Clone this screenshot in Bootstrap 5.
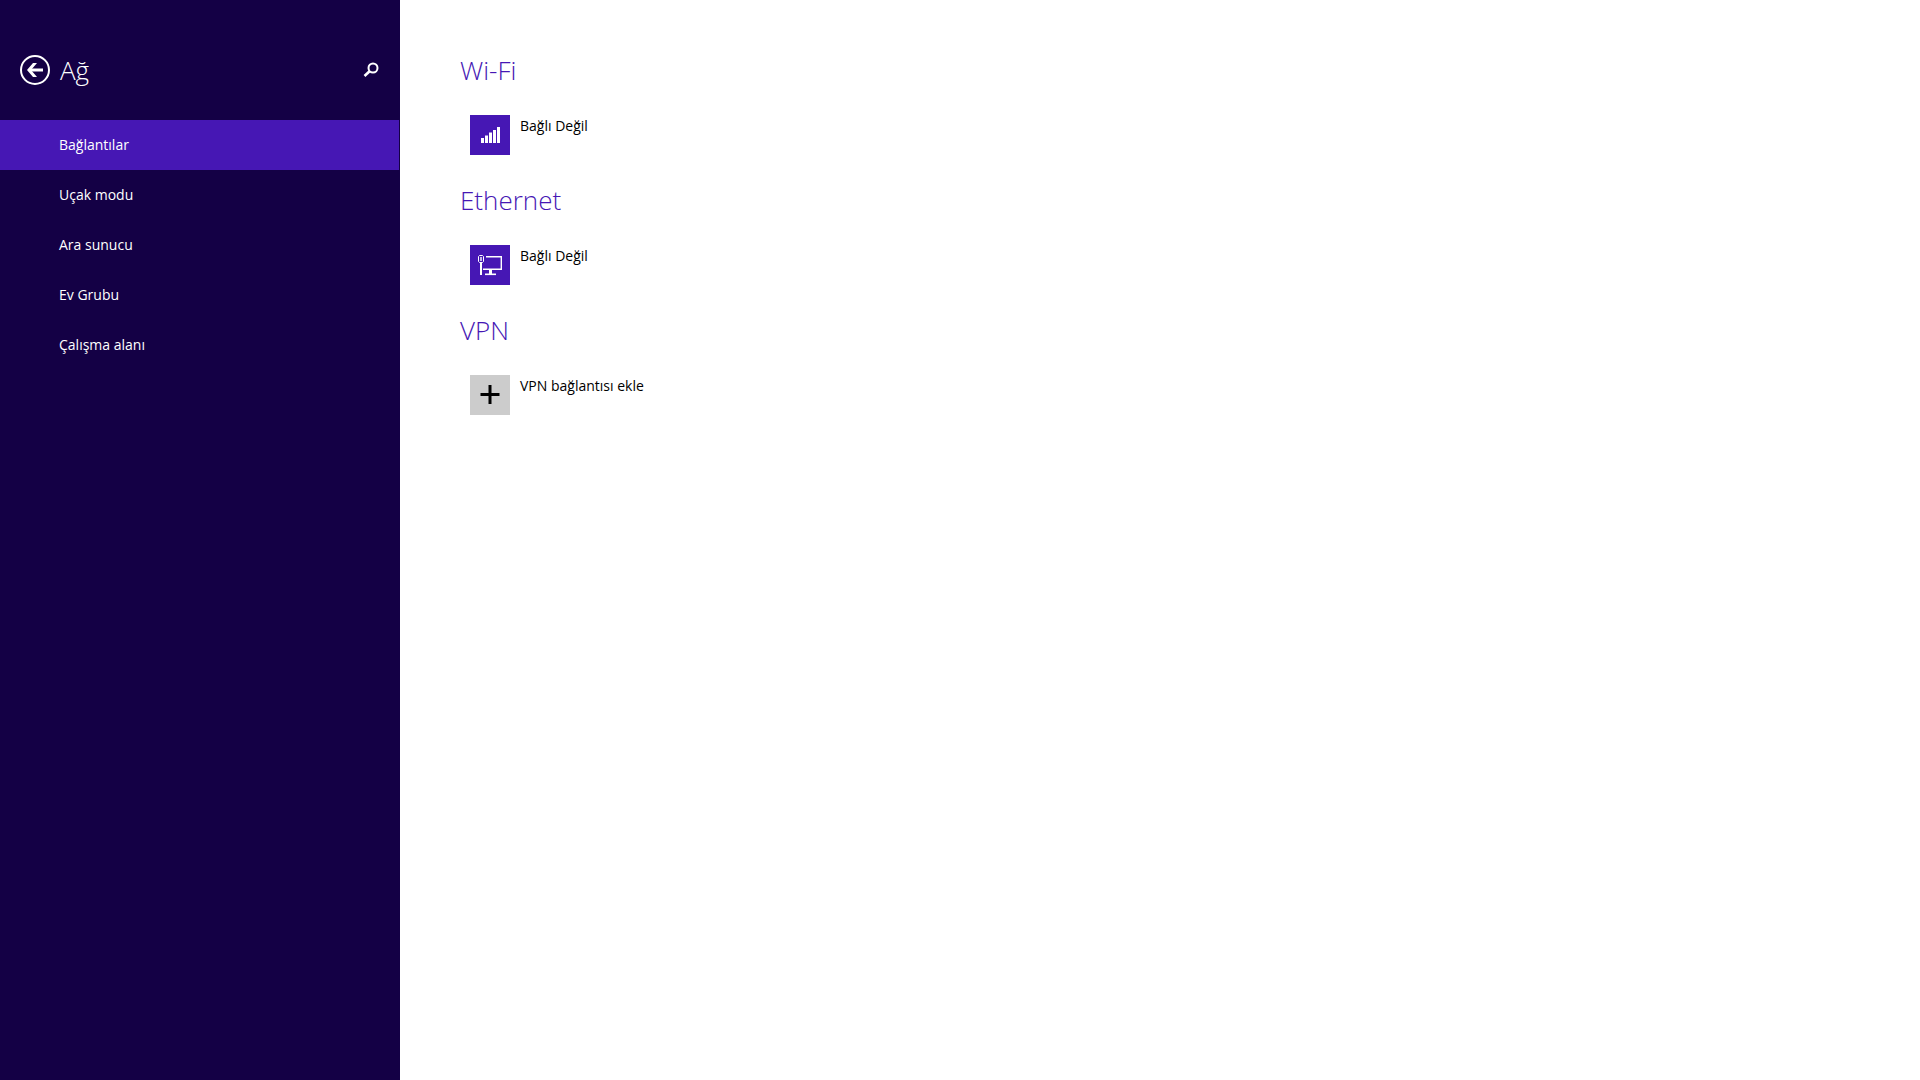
<!DOCTYPE html>
<html lang="tr">
<head>
<meta charset="utf-8">
<meta name="viewport" content="width=device-width, initial-scale=1">
<title>Ağ</title>
<link href="https://cdn.jsdelivr.net/npm/bootstrap@5.3.0/dist/css/bootstrap.min.css" rel="stylesheet">
<style>
  :root { --accent: #4617b4; --pane: #140045; }
  body { font-family: "Open Sans", "Noto Sans", sans-serif; font-size: 14px; line-height: 20px; color: #000; }
  .side-pane { width: 400px; background: var(--pane); border-right: 1px solid var(--pane); }
  .pane-header { height: 120px; padding: 20px 20px 0 20px; gap: 10px; }
  .pane-title, .group-title { font-size: 26px; line-height: 40px; font-weight: 300; }
  .group-title { color: var(--accent); margin-bottom: 25px; }
  .icon-btn { line-height: 0; color: #fff; }
  .pane-nav .nav-link { color: #fff; padding: 15px 20px 15px 59px; border-radius: 0; }
  .pane-nav .nav-link.active { background: var(--accent); }
  .settings { padding: 50px 60px; }
  .settings section { margin-bottom: 25px; }
  .net-item { margin-left: 10px; gap: 10px; color: #000; line-height: 22px; text-align: left; }
  .tile { width: 40px; height: 40px; background: var(--accent); }
  .tile-add { background: #ccc; }
</style>
</head>
<body>
<div class="d-flex min-vh-100">
  <aside class="side-pane flex-shrink-0">
    <header class="pane-header d-flex align-items-center">
      <button type="button" class="icon-btn btn p-0 border-0" aria-label="Geri">
        <svg width="30" height="30" viewBox="0 0 30 30" fill="none" stroke="#fff">
          <circle cx="15" cy="15" r="14" stroke-width="2"/>
          <path d="M23 15H9" stroke-width="3"/>
          <path d="M7 15L13 8H17L11 15L17 22H13Z" fill="#fff" stroke="none"/>
        </svg>
      </button>
      <h1 class="pane-title text-white mb-0 flex-grow-1">Ağ</h1>
      <button type="button" class="icon-btn btn p-0 border-0" aria-label="Ara">
        <svg width="16" height="16" viewBox="0 0 16 16" fill="none" stroke="#fff">
          <circle cx="10" cy="6" r="4.5" stroke-width="2"/>
          <path d="M6.6 9.2L1.5 14" stroke-width="2.6"/>
        </svg>
      </button>
    </header>
    <nav class="pane-nav nav flex-column">
      <a class="nav-link active" aria-current="page" href="#">Bağlantılar</a>
      <a class="nav-link" href="#">Uçak modu</a>
      <a class="nav-link" href="#">Ara sunucu</a>
      <a class="nav-link" href="#">Ev Grubu</a>
      <a class="nav-link" href="#">Çalışma alanı</a>
    </nav>
  </aside>
  <main class="settings flex-grow-1 bg-white">
    <section>
      <h2 class="group-title">Wi-Fi</h2>
      <button type="button" class="net-item d-flex align-items-start border-0 bg-transparent p-0">
        <span class="tile d-block">
          <svg class="d-block" width="40" height="40" viewBox="0 0 40 40" fill="#fff">
            <path d="M11 23h3v5h-3zM15 20.5h3v7.5h-3zM19 17.5h3v10.5h-3zM23 15h3v13h-3zM27 12h3v16h-3z"/>
          </svg>
        </span>
        <span>Bağlı Değil</span>
      </button>
    </section>
    <section>
      <h2 class="group-title">Ethernet</h2>
      <button type="button" class="net-item d-flex align-items-start border-0 bg-transparent p-0">
        <span class="tile d-block">
          <svg class="d-block" width="40" height="40" viewBox="0 0 40 40" fill="none" stroke="#fff">
            <path d="M16 11.7H31.3V24.3H13" stroke-width="1.4"/>
            <path d="M20.5 25V29" stroke-width="3"/>
            <path d="M15 29.3H26" stroke-width="1.6"/>
            <path d="M9.5 10.5H12.5L13.5 11.5V16.5L12.5 17.5H9.5L8.5 16.5V11.5Z" stroke-width="1"/>
            <path d="M11 12V16" stroke-width="1.4"/>
            <path d="M11 18V30" stroke-width="2"/>
          </svg>
        </span>
        <span>Bağlı Değil</span>
      </button>
    </section>
    <section>
      <h2 class="group-title">VPN</h2>
      <button type="button" class="net-item d-flex align-items-start border-0 bg-transparent p-0">
        <span class="tile tile-add d-block">
          <svg class="d-block" width="40" height="40" viewBox="0 0 40 40" stroke="#000" stroke-width="3">
            <path d="M10.5 19.5H29.5M20 10V29"/>
          </svg>
        </span>
        <span>VPN bağlantısı ekle</span>
      </button>
    </section>
  </main>
</div>
<script src="https://cdn.jsdelivr.net/npm/bootstrap@5.3.0/dist/js/bootstrap.bundle.min.js"></script>
</body>
</html>
